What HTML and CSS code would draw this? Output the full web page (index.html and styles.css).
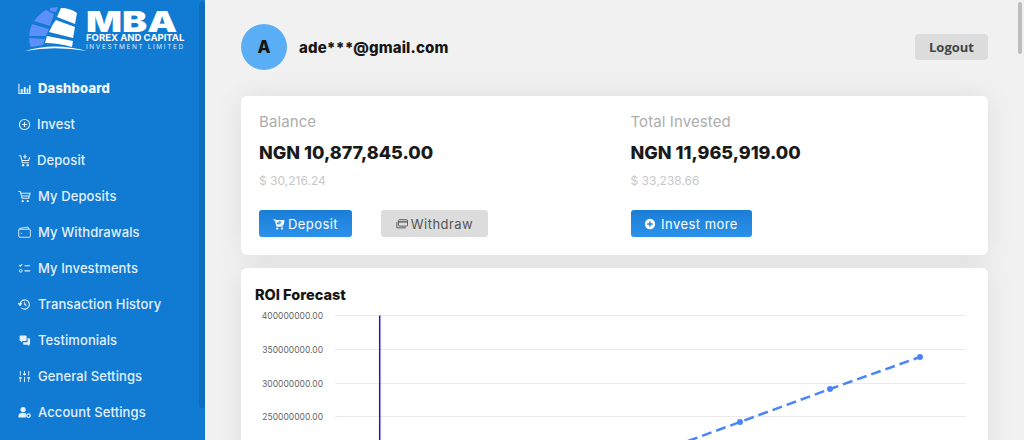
FILE: index.html
```html
<!DOCTYPE html>
<html lang="en">
<head>
  <meta charset="UTF-8" />
  <meta name="viewport" content="width=device-width, initial-scale=1.0" />
  <title>Dashboard - MBA Forex and Capital</title>
  <link rel="stylesheet" href="styles.css">
</head>
<body>
  <div class="sidebar">
    <div class="logo">
      <svg class="globe" width="66" height="54" viewBox="0 0 66 54">
        <g fill="#5b8ffa">
          <path d="M26 8 L34 7 L32 12 L26 11 Z" />
          <path d="M10 21 Q15 14 22 10 L30 14 L26 26 Z" />
          <path d="M5 36 Q6 29 8 24 L25 29 L22 36 Z" />
          <path d="M5 38 L21 39 L19 45 L7 47 Q5 43 5 38 Z" />
        </g>
        <g fill="#fff">
          <path d="M33 17 L37 8 Q46 8 53 13 L51 24 Z" />
          <path d="M29 24 L32 20 L51 27 L49 38 L25 32 Z" />
          <path d="M23 36 L49 41 L48 47 Q34 43 21 43 Z" />
        </g>
        <path d="M1 51 Q30 42 63 51 Q30 45.5 1 51 Z" fill="#fff" />
      </svg>
      <div class="logo-text">
        <div class="logo-mba">MBA</div>
        <div class="logo-forex">FOREX AND CAPITAL</div>
        <div class="logo-limited">INVESTMENT LIMITED</div>
      </div>
    </div>
    <div class="nav">
      <a class="nav-item active">
        <svg class="nav-icon" viewBox="0 0 14 14"><path d="M1 2v10.5h12.5" fill="none" stroke="currentColor" stroke-width="1.1"/><path d="M3 7.5h2v4H3zM6.2 5.5h2v6h-2zM9.4 7h1.6v4.5H9.4zM11.8 3.5h1.7v8h-1.7z" fill="currentColor"/></svg>
        <span>Dashboard</span>
      </a>
      <a class="nav-item tight">
        <svg class="nav-icon" viewBox="0 0 14 14"><circle cx="7" cy="7" r="5.5" fill="none" stroke="currentColor" stroke-width="1.1"/><path d="M7 4.2v5.6M4.2 7h5.600" stroke="currentColor" stroke-width="1.2"/></svg>
        <span>Invest</span>
      </a>
      <a class="nav-item tight">
        <svg class="nav-icon" viewBox="0 0 14 14"><path d="M1 2h2l1.7 7.500h7M4 7h7.500l1-3.500" fill="none" stroke="currentColor" stroke-width="1.1"/><path d="M7.500 0.500v4.500M5.500 3h4" stroke="currentColor" stroke-width="1.2"/><circle cx="5.500" cy="12" r="1.3" fill="currentColor"/><circle cx="10.500" cy="12" r="1.3" fill="currentColor"/></svg>
        <span>Deposit</span>
      </a>
      <a class="nav-item">
        <svg class="nav-icon" viewBox="0 0 14 14"><path d="M.5 1.5h2l1.800 7.500h7.200l1.500-5.500H3.200M4.300 6.500h8" fill="none" stroke="currentColor" stroke-width="1.1"/><circle cx="5" cy="12" r="1.2" fill="currentColor"/><circle cx="10.500" cy="12" r="1.2" fill="currentColor"/></svg>
        <span>My Deposits</span>
      </a>
      <a class="nav-item">
        <svg class="nav-icon" viewBox="0 0 14 14"><path d="M1.5 3.500h11a.8.8 0 0 1 .8.8v7a.8.8 0 0 1-.8.8H2a1.2 1.2 0 0 1-1.200-1.200V4q0-1.300 1.300-1.500l9-1.300v2.100" fill="none" stroke="currentColor" stroke-width="1"/><path d="M3 8h1.300" stroke="currentColor" stroke-width="1"/></svg>
        <span>My Withdrawals</span>
      </a>
      <a class="nav-item">
        <svg class="nav-icon" viewBox="0 0 14 14"><path d="M1.5 3.500l1 1 2-2.200M7 4h6M7 9.500h6" fill="none" stroke="currentColor" stroke-width="1.2"/><circle cx="3" cy="9.500" r="1.500" fill="none" stroke="currentColor"/></svg>
        <span>My Investments</span>
      </a>
      <a class="nav-item">
        <svg class="nav-icon" viewBox="0 0 14 14"><path d="M2.200 7a5 5 0 1 1 1.500 3.600" fill="none" stroke="currentColor" stroke-width="1.2"/><path d="M0 5.700h4.300L2.200 8.500zM7 4v3.300l2.200 1.300" fill="currentColor" stroke="currentColor" stroke-width=".6"/></svg>
        <span>Transaction History</span>
      </a>
      <a class="nav-item">
        <svg class="nav-icon" viewBox="0 0 14 14"><path d="M2.500 1.500h6a.8.8 0 0 1 .8.8v4.500a.8.8 0 0 1-.8.8H5l-1.700 1.500V7.600h-.8a.8.8 0 0 1-.8-.8V2.300a.8.8 0 0 1 .8-.8z" fill="currentColor"/><path d="M10.300 4.500h1.700a1 1 0 0 1 1 1v5a1 1 0 0 1-1 1v1.500l-2-1.500H6.500a1 1 0 0 1-1-1V9h4a.8.8 0 0 0 .8-.8z" fill="currentColor"/></svg>
        <span>Testimonials</span>
      </a>
      <a class="nav-item">
        <svg class="nav-icon" viewBox="0 0 14 14"><path d="M2.500 1v12M7 1v12M11.500 1v12" stroke="currentColor" stroke-width="1" stroke-dasharray="5 1.500 7"/><path d="M1 8.500h3M5.500 4.500h3M10 8.500h3" stroke="currentColor" stroke-width="1.5"/></svg>
        <span>General Settings</span>
      </a>
      <a class="nav-item">
        <svg class="nav-icon" viewBox="0 0 14 14"><circle cx="5.500" cy="3.800" r="2.800" fill="currentColor"/><path d="M.5 12.500V11q0-3.500 3.500-3.500h3q1 0 1.500.4v4.600z" fill="currentColor"/><circle cx="11.300" cy="10.300" r="1.900" fill="none" stroke="currentColor" stroke-width="1.4"/></svg>
        <span>Account Settings</span>
      </a>
    </div>
    <div class="sidebar-scroll"></div>
  </div>

  <div class="main">
    <div class="topbar">
      <div class="user">
        <div class="avatar">A</div>
        <div class="email">ade***@gmail.com</div>
      </div>
      <button class="logout">Logout</button>
    </div>

    <div class="card balances">
      <div class="balance-col">
        <div class="label">Balance</div>
        <div class="amount">NGN 10,877,845.00</div>
        <div class="usd">$ 30,216.24</div>
        <div class="actions">
          <button class="btn btn-blue deposit-btn">
            <svg class="btn-icon" viewBox="0 0 14 14"><path d="M.5 2h2.300l1.500 7.500h7.500M3.300 3h9.700l-1.200 5H4.200z" fill="currentColor" stroke="currentColor"/><circle cx="5" cy="12.300" r="1.300" fill="currentColor"/><circle cx="10.500" cy="12.300" r="1.300" fill="currentColor"/><path d="M8 3.300v3.600M6.200 5.100h3.600" stroke="#1f85de" stroke-width="1.1"/></svg>
            Deposit
          </button>
          <button class="btn btn-grey withdraw-btn">
            <svg class="btn-icon" viewBox="0 0 14 14"><rect x="3" y="2" width="10.500" height="7.500" rx="1" fill="none" stroke="currentColor" stroke-width="1.1"/><path d="M3 4.500h10.500" stroke="currentColor" stroke-width="1.5"/><path d="M1 4.500v7h10.500" fill="none" stroke="currentColor" stroke-width="1.1"/></svg>
            Withdraw
          </button>
        </div>
      </div>
      <div class="balance-col">
        <div class="label">Total Invested</div>
        <div class="amount">NGN 11,965,919.00</div>
        <div class="usd">$ 33,238.66</div>
        <div class="actions">
          <button class="btn btn-blue invest-btn">
            <svg class="btn-icon" viewBox="0 0 14 14"><circle cx="7" cy="7" r="6" fill="currentColor"/><path d="M7 3.800v6.400M3.800 7h6.400" stroke="#1f85de" stroke-width="1.6"/></svg>
            Invest more
          </button>
        </div>
      </div>
    </div>

    <div class="card forecast">
      <h3>ROI Forecast</h3>
      <svg class="chart" width="747" height="130" viewBox="0 0 747 130">
        <g stroke="#e9e9ee" stroke-width="1">
          <path d="M94 5.500H725M94 39.500H725M94 73.500H725M94 106.500H725" />
        </g>
        <g class="chart-labels" text-anchor="end">
          <text x="82" y="9">400000000.00</text>
          <text x="82" y="43">350000000.00</text>
          <text x="82" y="77">300000000.00</text>
          <text x="82" y="110">250000000.00</text>
        </g>
        <path d="M138.700 5.500V130" stroke="#1a10e8" stroke-width="1.500" />
        <path d="M447 131L499 112L589 79L679 47" fill="none" stroke="#4a86f7" stroke-width="2.500" stroke-dasharray="10 5" />
        <g fill="#4a86f7">
          <circle cx="499" cy="112" r="3" />
          <circle cx="589" cy="79" r="3" />
          <circle cx="679" cy="47" r="3" />
        </g>
      </svg>
    </div>
  </div>
  <div class="main-scroll"></div>
</body>
</html>
```

FILE: styles.css
```css
* {
  margin: 0;
  padding: 0;
  box-sizing: border-box;
}
html, body {
  height: 440px;
  overflow: hidden;
}
body {
  display: flex;
  font-family: Inter, 'Liberation Sans', sans-serif;
  background-color: #f1f1f1;
  color: #161616;
}
/* Sidebar */
.sidebar {
  position: relative;
  flex: 0 0 205px;
  height: 440px;
  background: #117ad3;
  overflow: hidden;
}
.sidebar-scroll {
  position: absolute;
  top: 2px;
  right: 0;
  width: 6px;
  height: 406px;
  background: #0f6dbd;
  border-radius: 3px;
}
.logo {
  display: flex;
  height: 70px;
  padding-left: 24px;
}
.globe {
  flex: none;
  margin-right: -4px;
}
.logo-text {
  padding-top: 10px;
  color: #fff;
  width: 98px;
  white-space: nowrap;
}
.logo-mba {
  font-size: 29px;
  line-height: 23px;
  font-weight: 900;
  transform: scaleX(1.3);
  transform-origin: left center;
}
.logo-forex {
  font-size: 9.500px;
  line-height: 9px;
  font-weight: 700;
}
.logo-limited {
  margin-top: 1px;
  font-size: 6.500px;
  line-height: 8px;
  letter-spacing: 1.6px;
  color: #dcebf9;
}
.nav {
  display: flex;
  flex-direction: column;
}
.nav-item {
  display: flex;
  align-items: center;
  height: 36px;
  padding-left: 18px;
  font-size: 13px;
  font-weight: 500;
  letter-spacing: .1px;
  color: #e4f0fb;
}
.nav-item.active {
  font-weight: 800;
  letter-spacing: .2px;
  color: #f6fafe;
}
.nav-icon {
  flex: none;
  width: 13px;
  height: 13px;
  margin-right: 7px;
}
.nav-item.tight .nav-icon {
  margin-right: 6px;
}
/* Main area */
.main {
  flex: 1;
  padding: 24px 36px 0;
  min-width: 0;
}
.main-scroll {
  position: absolute;
  top: 2px;
  right: 2px;
  width: 4px;
  height: 52px;
  background: #bdbdbd;
  border-radius: 2px;
}
.topbar {
  display: flex;
  justify-content: space-between;
  align-items: center;
  height: 46px;
  margin-bottom: 26px;
}
.user {
  display: flex;
  align-items: center;
  gap: 12px;
}
.avatar {
  display: flex;
  align-items: center;
  justify-content: center;
  width: 46px;
  height: 46px;
  border-radius: 50%;
  background: #5aaef5;
  font-size: 17px;
  font-weight: 800;
}
.email {
  font-size: 15px;
  font-weight: 800;
  letter-spacing: .15px;
}
.logout {
  width: 73px;
  height: 26px;
  border: none;
  border-radius: 4px;
  background: #dcdcdc;
  color: #444;
  font-family: 'Open Sans', sans-serif;
  font-size: 13px;
  font-weight: 700;
}
.card {
  background: #fff;
  border-radius: 6px;
  box-shadow: 0 0 28px rgba(0,0,0,0.08);
}
/* Balance card */
.balances {
  display: grid;
  grid-template-columns: 371.500px 1fr;
  height: 159px;
  padding: 17px 18px 0;
  margin-bottom: 13px;
}
.label {
  font-size: 15px;
  line-height: 18px;
  color: #adadad;
  letter-spacing: .1px;
}
.amount {
  margin-top: 10px;
  font-size: 18px;
  line-height: 24px;
  font-weight: 800;
  color: #1a1a1a;
}
.usd {
  margin-top: 8px;
  font-size: 12px;
  line-height: 16px;
  color: #c8c8c8;
}
.actions {
  display: flex;
  gap: 29px;
  margin-top: 21px;
}
.btn {
  display: flex;
  align-items: center;
  justify-content: center;
  gap: 3px;
  height: 27px;
  border: none;
  border-radius: 3px;
  font-family: Inter, sans-serif;
  font-size: 13px;
  font-weight: 400;
  letter-spacing: .45px;
}
.btn-icon {
  width: 12px;
  height: 12px;
}
.btn-blue {
  background: linear-gradient(#1a7ed8, #2c91e9);
  color: #fff;
}
.btn-grey {
  background: #dcdcdc;
  color: #555;
}
.deposit-btn {
  width: 93px;
}
.withdraw-btn {
  width: 107px;
}
.invest-btn {
  width: 121px;
  gap: 5px;
}
/* Forecast card */
.forecast {
  height: 240px;
  padding-top: 19px;
}
.forecast h3 {
  margin-left: 14px;
  font-size: 14.500px;
  line-height: 16px;
  font-weight: 800;
  color: #161616;
}
.chart {
  display: block;
  margin-top: 7px;
}
.chart-labels {
  font-family: Inter, sans-serif;
  font-size: 8.500px;
  fill: #666;
}
```
